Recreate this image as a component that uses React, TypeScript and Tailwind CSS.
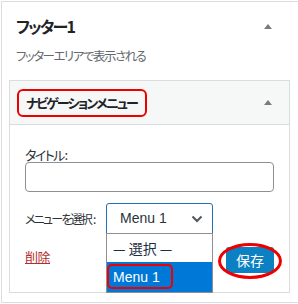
import React from "react";

const jp = "font-['Noto_Sans_CJK_JP',sans-serif] [font-feature-settings:'palt']";

function Tri() {
  return (
    <svg width="8" height="5" viewBox="0 0 8 5">
      <polygon points="4,0 8,5 0,5" fill="#787c82" />
    </svg>
  );
}

export default function App() {
  return (
    <div className={`w-[298px] h-[304px] bg-white overflow-hidden pt-[1px] pl-[1px] ${jp}`}>
      <div className="relative w-[297px] h-[302px] border-t border-l border-b border-[#dcdcde] bg-white pl-[7px] pr-[8px]">
        <div className="flex items-center justify-between h-[48px] pl-[7px] pr-[18px]">
          <div className="text-[16px] font-bold text-[#1d2327] leading-none tracking-[-1.8px]">フッター1</div>
          <Tri />
        </div>
        <div className="pl-[7px] text-[12.5px] text-[#646970] leading-none h-[30px] tracking-[-1.5px] whitespace-nowrap">フッターエリアで表示される</div>
        <div className="relative border border-[#dcdcde] h-[213px]">
          <div className="relative flex items-center justify-between h-[44px] bg-[#f6f7f7] border-b border-[#dcdcde] pl-[16px] pr-[17px]">
            <div className="text-[13px] font-semibold text-[#1d2327] leading-none tracking-[-1.8px] whitespace-nowrap">ナビゲーションメニュー</div>
            <Tri />
            <div className="absolute left-[7px] top-[8px] w-[130px] h-[28px] border-2 border-[#ee0000] rounded-[6px]" />
          </div>
          <div className="pl-[15px] pr-[15px] pt-[23px]">
            <div className="text-[13px] text-[#2c3338] leading-none h-[14px] tracking-[-1.6px]">タイトル<span className="ml-[1px]">:</span></div>
            <div className="w-[249px] h-[30px] border border-[#8c8f94] rounded-[4px] bg-white" />
            <div className="mt-[11px] flex items-center">
              <div className="relative z-10 text-[12px] text-[#2c3338] leading-none w-[81px] whitespace-nowrap tracking-[-1.8px]">メニューを選択<span className="ml-[2px] tracking-normal">:</span></div>
              <div className="relative">
                <div className="w-[107px] h-[31px] border border-[#2271b1] rounded-t-[3px] flex items-center justify-between pl-[13px] pr-[9px] bg-white">
                  <span className="font-['Liberation_Sans',sans-serif] text-[14px] text-[#2c3338]">Menu 1</span>
                  <svg width="12" height="8" viewBox="0 0 12 8">
                    <path d="M1.5 1.5 L6 6 L10.5 1.5" fill="none" stroke="#50575e" strokeWidth="2" />
                  </svg>
                </div>
                <div className="absolute left-0 top-[30px] w-[107px] border border-[#8c8f94] bg-white z-10">
                  <div className="h-[28px] flex items-center pl-[6px] text-[14px] text-[#1d2f44] whitespace-nowrap">— 選択 —</div>
                  <div className="relative h-[30px] flex items-center pl-[6px] bg-[#0078d7] text-white font-['Liberation_Sans',sans-serif] text-[14px]">
                    Menu 1
                    <div className="absolute left-0 top-[2px] w-[66px] h-[25px] border-2 border-[#ee0000] rounded-[5px]" />
                  </div>
                </div>
              </div>
            </div>
            <div className="mt-[13px] flex items-start justify-between">
              <a className="mt-[3px] text-[13px] text-[#b32d2e] underline leading-none tracking-[-0.5px]">削除</a>
              <div className="relative">
                <button className="w-[48px] h-[26px] bg-[#0b80c3] text-white text-[14px] leading-none rounded-[3px]">保存</button>
                <div className="absolute left-[-8px] top-[-4px] w-[64px] h-[36px] border-[3px] border-[#ee0000] rounded-[50%]" />
              </div>
            </div>
          </div>
        </div>
      </div>
    </div>
  );
}
